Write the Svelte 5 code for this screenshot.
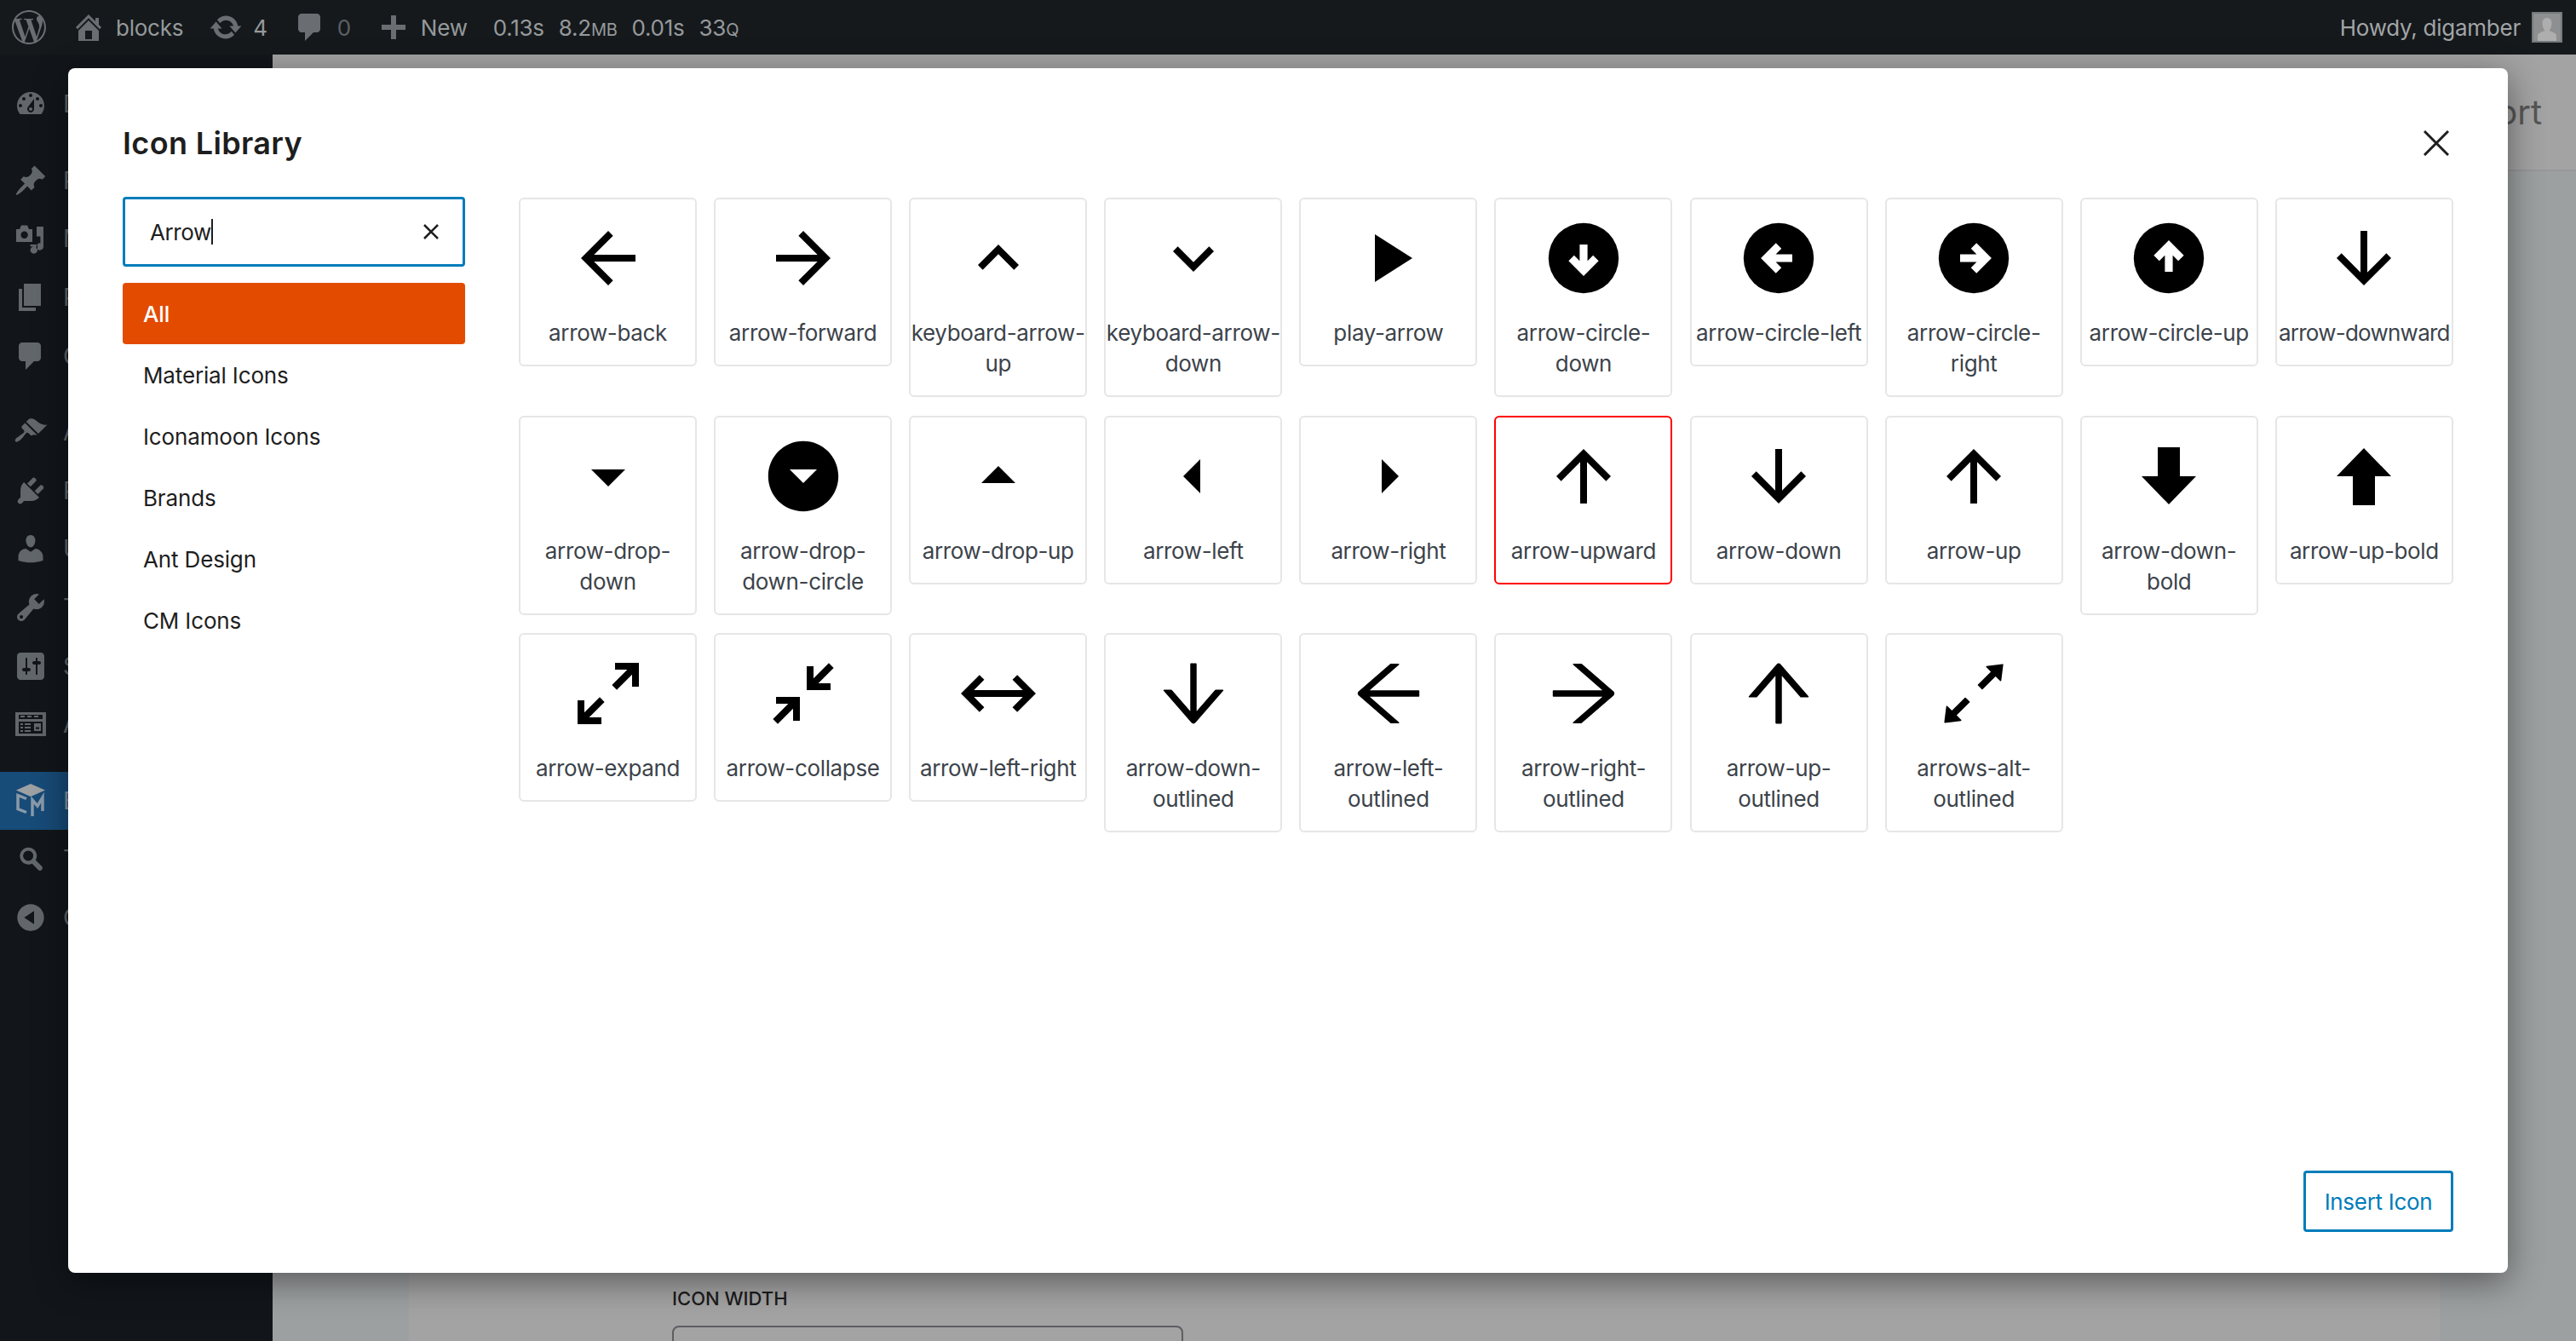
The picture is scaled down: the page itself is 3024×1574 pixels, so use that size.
<script>
  const ANT = '24 24 976 976'
  const upward = 'M4 12l1.41 1.41L11 7.83V20h2V7.83l5.58 5.59L20 12l-8-8-8 8z'
  const downward = 'M20 12l-1.41-1.41L13 16.17V4h-2v12.17l-5.58-5.59L4 12l8 8 8-8z'

  const icons = [
    { name: 'arrow-back', d: 'M20 11H7.83l5.59-5.59L12 4l-8 8 8 8 1.41-1.41L7.83 13H20v-2z' },
    { name: 'arrow-forward', d: 'M12 4l-1.41 1.41L16.17 11H4v2h12.17l-5.58 5.59L12 20l8-8z' },
    { name: 'keyboard-arrow-up', d: 'M7.41 15.41L12 10.83l4.59 4.58L18 14l-6-6-6 6z' },
    { name: 'keyboard-arrow-down', d: 'M7.41 8.59L12 13.17l4.59-4.58L18 10l-6 6-6-6z' },
    { name: 'play-arrow', d: 'M8 5v14l11-7z' },
    { name: 'arrow-circle-down', rot: 90 },
    { name: 'arrow-circle-left', rot: 180 },
    { name: 'arrow-circle-right', rot: 0 },
    { name: 'arrow-circle-up', rot: -90 },
    { name: 'arrow-downward', d: downward, tight: true },
    { name: 'arrow-drop-down', d: 'M7 10l5 5 5-5z' },
    { name: 'arrow-drop-down-circle', d: 'M12 1.7C6.3 1.7 1.7 6.3 1.7 12S6.3 22.3 12 22.3 22.3 17.7 22.3 12 17.7 1.7 12 1.7zm0 12.3l-4-4h8l-4 4z' },
    { name: 'arrow-drop-up', d: 'M7 14l5-5 5 5z' },
    { name: 'arrow-left', d: 'M14 7l-5 5 5 5V7z' },
    { name: 'arrow-right', d: 'M10 17l5-5-5-5v10z' },
    { name: 'arrow-upward', d: upward, selected: true },
    { name: 'arrow-down', d: downward },
    { name: 'arrow-up', d: upward },
    { name: 'arrow-down-bold', d: 'M8.75 3.5h6.5V12H20l-8 8.25L4 12h4.75z' },
    { name: 'arrow-up-bold', d: 'M8.75 20.5h6.5V12H20l-8-8.25L4 12h4.75z' },
    { name: 'arrow-expand', d: 'M10,21V19H6.41L10.91,14.5L9.5,13.09L5,17.59V14H3V21H10M14.5,10.91L19,6.41V10H21V3H14V5H17.59L13.09,9.5L14.5,10.91Z' },
    { name: 'arrow-collapse', d: 'M19.5,3.09L15,7.59V4H13V11H20V9H16.41L20.91,4.5L19.5,3.09M4,13V15H7.59L3.09,19.5L4.5,20.91L9,16.41V20H11V13H4Z' },
    { name: 'arrow-left-right', d: 'M6.45,17.45L1,12L6.45,6.55L7.86,7.96L4.83,11H19.17L16.14,7.96L17.55,6.55L23,12L17.55,17.45L16.14,16.04L19.17,13H4.83L7.86,16.04L6.45,17.45Z' },
    { name: 'arrow-down-outlined', vb: ANT, d: 'M862 465.3h-81c-4.6 0-9 2-12.1 5.5L550 723.1V160c0-4.4-3.6-8-8-8h-60c-4.4 0-8 3.6-8 8v563.1L255.1 470.8c-3-3.5-7.5-5.5-12.1-5.5h-81c-6.8 0-10.5 8.1-6 13.2L487.9 861a31.96 31.96 0 0048.3 0L868 478.5c4.4-5.2.8-13.2-6-13.2z' },
    { name: 'arrow-left-outlined', vb: ANT, d: 'M872 474H286.9l350.2-304c5.6-4.9 2.2-14-5.2-14h-88.5c-3.9 0-7.6 1.4-10.5 3.9L155 487.8a31.96 31.96 0 000 48.3L535.1 866c1.5 1.3 3.3 2 5.2 2h91.5c7.4 0 10.8-9.2 5.2-14L286.9 550H872c4.4 0 8-3.6 8-8v-60c0-4.4-3.6-8-8-8z' },
    { name: 'arrow-right-outlined', vb: ANT, d: 'M869 487.8L491.2 159.9c-2.9-2.5-6.6-3.9-10.5-3.9h-88.5c-7.4 0-10.8 9.2-5.2 14l350.2 304H152c-4.4 0-8 3.6-8 8v60c0 4.4 3.6 8 8 8h585.1L386.9 854c-5.6 4.9-2.2 14 5.2 14h91.5c1.9 0 3.8-.7 5.2-2L869 536.2a32.07 32.07 0 000-48.4z' },
    { name: 'arrow-up-outlined', vb: ANT, d: 'M868 545.5L536.1 163a31.96 31.96 0 00-48.3 0L156 545.5a7.97 7.97 0 006 13.2h81c4.6 0 9-2 12.1-5.5L474 300.9V864c0 4.4 3.6 8 8 8h60c4.4 0 8-3.6 8-8V300.9l218.9 252.3c3 3.5 7.4 5.5 12.1 5.5h81c6.8 0 10.5-8 6-13.2z' },
    { name: 'arrows-alt-outlined', vb: ANT, d: 'M855 160.1l-189.2 23.5c-6.6.8-9.3 8.8-4.7 13.5l54.7 54.7-153.5 153.5a8.03 8.03 0 000 11.3l45.1 45.1c3.1 3.1 8.2 3.1 11.3 0l153.6-153.6 54.7 54.7a7.94 7.94 0 0013.5-4.7L863.9 169a7.9 7.9 0 00-8.9-8.9zM416.6 562.3a8.03 8.03 0 00-11.3 0L251.8 715.9l-54.7-54.7a7.94 7.94 0 00-13.5 4.7L160.1 855c-.6 5.2 3.7 9.5 8.9 8.9l189.2-23.5c6.6-.8 9.3-8.8 4.7-13.5l-54.7-54.7 153.6-153.6c3.1-3.1 3.1-8.2 0-11.3l-45.2-45z' }
  ]

  const libraries = ['All', 'Material Icons', 'Iconamoon Icons', 'Brands', 'Ant Design', 'CM Icons']

  const menu = [
    { label: 'Dashboard', d: 'M3.76 16h12.48c1.1-1.37 1.76-3.11 1.76-5 0-4.42-3.58-8-8-8s-8 3.58-8 8c0 1.89.66 3.63 1.76 5zM10 4c.55 0 1 .45 1 1s-.45 1-1 1-1-.45-1-1 .45-1 1-1zM6 6c.55 0 1 .45 1 1s-.45 1-1 1-1-.45-1-1 .45-1 1-1zm8 0c.55 0 1 .45 1 1s-.45 1-1 1-1-.45-1-1 .45-1 1-1zm-5.37 5.55L12 7v6c0 1.1-.9 2-2 2s-2-.9-2-2c0-.57.24-1.08.63-1.45zM4 10c.55 0 1 .45 1 1s-.45 1-1 1-1-.45-1-1 .45-1 1-1zm12 0c.55 0 1 .45 1 1s-.45 1-1 1-1-.45-1-1 .45-1 1-1zm-5 3c0-.55-.45-1-1-1s-1 .45-1 1 .45 1 1 1 1-.45 1-1z', sep: true },
    { label: 'Posts', d: 'M10.44 3.02l1.82-1.82 6.36 6.35-1.83 1.82c-1.05-.68-2.48-.57-3.41.36l-.75.75c-.92.93-1.04 2.35-.35 3.41l-1.83 1.82-2.41-2.41-2.8 2.79c-.42.42-3.38 2.71-3.8 2.29s1.86-3.39 2.28-3.81l2.79-2.79L4.1 9.36l1.83-1.82c1.05.69 2.48.57 3.4-.36l.75-.75c.93-.92 1.05-2.35.36-3.41z' },
    { label: 'Media', d: 'M1.500 4.500h2l1-2.300h3.500l1 2.300h2v7.500h-9.500V4.500zm4.800 1.300a2.100 2.100 0 100 4.200 2.100 2.100 0 000-4.200zM13.500 3H17.500v11.800a2.100 2.100 0 11-1.800-2.100V8.800h-2.200V3zM9.800 13.500H14v3.300a2.100 2.100 0 11-1.800-2.100v-.1H9.800v-1.100z' },
    { label: 'Pages', d: 'M6 15V2h10v13H6zm-1 1h8v2H3V5h2v11z' },
    { label: 'Comments', d: 'M5 2h9c1.1 0 2 .9 2 2v7c0 1.1-.9 2-2 2h-2l-5 5v-5H5c-1.1 0-2-.9-2-2V4c0-1.1.9-2 2-2z', sep: true },
    { label: 'Appearance', d: 'M14.48 11.06L7.41 3.99l1.5-1.5c.5-.56 2.3-.47 3.51.32 1.21.8 1.43 1.28 2.91 2.1 1.18.64 2.45 1.26 4.45.85zm-.71.71L6.7 4.7 4.93 6.47c-.39.39-.39 1.02 0 1.41l1.06 1.06c.39.39.39 1.03 0 1.42-.6.6-1.43 1.11-2.21 1.69-.35.26-.7.53-1.01.84C1.43 13.23.4 14.89 1.1 15.6c.7.7 2.36-.33 3.7-1.67.31-.31.58-.66.84-1.01.58-.78 1.09-1.61 1.69-2.21.39-.39 1.02-.39 1.41 0l1.06 1.06c.39.39 1.02.39 1.41 0z' },
    { label: 'Plugins', d: 'M13.11 4.36L9.87 7.6 8 5.73l3.24-3.24c.35-.34 1.05-.2 1.56.32.52.51.66 1.21.31 1.55zm-8 1.77l.91-1.12 9.01 9.01-1.19.84c-.71.71-2.63 1.16-3.82 1.16H6.14L4.9 17.26c-.59.59-1.54.59-2.12 0-.59-.58-.59-1.53 0-2.12l1.24-1.24v-3.88c0-1.13.4-3.19 1.09-3.89zm7.26 3.97l3.24-3.24c.34-.35 1.04-.21 1.55.31.52.51.66 1.21.31 1.55l-3.24 3.25z' },
    { label: 'Users', d: 'M10 9.25c-2.27 0-2.73-3.44-2.73-3.44C7 4.02 7.82 2 9.97 2c2.16 0 2.98 2.02 2.71 3.81 0 0-.41 3.44-2.68 3.44zm0 2.57L12.72 10c2.39 0 4.52 2.33 4.52 4.53v2.49s-3.65 1.13-7.24 1.13c-3.65 0-7.24-1.13-7.24-1.13v-2.49c0-2.25 1.94-4.48 4.47-4.48z' },
    { label: 'Tools', d: 'M16.68 9.77c-1.34 1.34-3.3 1.67-4.95.99l-5.41 6.52c-.99.99-2.59.99-3.58 0s-.99-2.59 0-3.57l6.52-5.42c-.68-1.65-.35-3.61.99-4.95 1.28-1.28 3.12-1.62 4.72-1.06l-2.89 2.89 2.82 2.82 2.86-2.87c.53 1.58.18 3.39-1.08 4.65zM3.81 16.21c.4.39 1.04.39 1.43 0 .4-.4.4-1.04 0-1.43-.39-.4-1.03-.4-1.43 0-.39.39-.39 1.03 0 1.43z' },
    { label: 'Settings', d: 'M18 16V4c0-1.1-.9-2-2-2H4c-1.1 0-2 .9-2 2v12c0 1.1.9 2 2 2h12c1.1 0 2-.9 2-2zM8 11h1c.55 0 1 .45 1 1s-.45 1-1 1H8v1.5c0 .28-.22.5-.5.5s-.5-.22-.5-.5V13H6c-.55 0-1-.45-1-1s.45-1 1-1h1V5.5c0-.28.22-.5.5-.5s.5.22.5.5V11zm5-2h-1c-.55 0-1-.45-1-1s.45-1 1-1h1V5.500c0-.28.22-.5.5-.5s.5.22.5.5V7h1c.55 0 1 .45 1 1s-.45 1-1 1h-1v5.500c0 .28-.22.5-.5.5s-.5-.22-.5-.5V9z' },
    { label: 'A', d: 'M1 3h18v14H1V3zm2 1.5V7h14V4.500H3zM4 5h2.500v1H4V5zm4 0h2.500v1H8V5zm4 0h2.500v1H12V5zM3 8.500V15.500h14V8.500H3zM4 9.500h1.500v1H4v-1zm2.500 0H10v1H6.500v-1zM12 9.500h4V14h-4V9.500zm1 2.200v1.200h2v-1.200h-2zM4 11.500h1.500v1H4v-1zm2.500 0H10v1H6.500v-1zM4 13.500h1.500v1H4v-1zm2.500 0H10v1H6.500v-1z', sep: true },
    { label: 'Blocks', active: true },
    { label: 'T', d: 'M12.140 4.780a5 5 0 01.800 6l3.700 3.700a1.500 1.500 0 01-2.100 2.100l-3.700-3.700a5 5 0 111.300-8.100zm-1.400 1.400a3 3 0 10-4.240 4.240 3 3 0 004.240-4.240z' },
    { label: 'Collapse menu', d: 'M10 2.160c4.330 0 7.840 3.510 7.840 7.840s-3.510 7.840-7.840 7.840S2.160 14.330 2.160 10 5.710 2.160 10 2.160zm2 11.720V6.120L6.180 9.970z' }
  ]
</script>

<div class="page">
  <header class="topbar">
    <svg class="wp" viewBox="0 0 24 24"><path d="M21.469 6.825c.84 1.537 1.318 3.3 1.318 5.175 0 3.979-2.156 7.456-5.363 9.325l3.295-9.527c.615-1.54.82-2.771.82-3.864 0-.405-.026-.78-.07-1.11m-7.981.105c.647-.03 1.232-.105 1.232-.105.582-.075.514-.93-.067-.899 0 0-1.755.135-2.88.135-1.064 0-2.85-.15-2.85-.15-.585-.03-.661.855-.075.885 0 0 .54.061 1.125.09l1.68 4.605-2.37 7.08L5.354 6.9c.649-.03 1.234-.1 1.234-.1.585-.075.516-.93-.065-.896 0 0-1.746.138-2.874.138-.2 0-.438-.008-.69-.015C4.911 3.15 8.235 1.215 12 1.215c2.809 0 5.365 1.072 7.286 2.833-.046-.003-.091-.009-.141-.009-1.06 0-1.812.923-1.812 1.914 0 .89.513 1.643 1.06 2.531.411.72.89 1.643.89 2.977 0 .915-.354 1.994-.821 3.479l-1.075 3.585-3.9-11.61.001.014zM12 22.784c-1.059 0-2.081-.153-3.048-.437l3.237-9.406 3.315 9.087c.024.053.05.101.078.149-1.12.393-2.325.609-3.582.609M1.211 12c0-1.564.336-3.05.935-4.39L7.29 21.709C3.694 19.96 1.212 16.271 1.211 12M12 0C5.385 0 0 5.385 0 12s5.385 12 12 12 12-5.385 12-12S18.615 0 12 0" /></svg>
    <div class="ab">
      <svg viewBox="0 0 20 20"><path d="M16 8.5l1.53 1.53-1.06 1.06L10 4.62l-6.47 6.47-1.06-1.06L10 2.5l4 4v-2h2v4zm-6-2.46l6 5.99V18H4v-5.97zM12 17v-5H8v5h4z" /></svg>
      <span>blocks</span>
    </div>
    <div class="ab">
      <svg viewBox="0 0 20 20"><path d="M10.2 3.28c3.53 0 6.43 2.61 6.92 6h2.08l-3.5 4-3.5-4h2.32c-.45-1.97-2.21-3.45-4.32-3.45-1.45 0-2.73.71-3.54 1.78L4.95 5.66C6.230 4.200 8.110 3.280 10.200 3.280zm-.4 13.440c-3.520 0-6.430-2.610-6.920-6H.8l3.500-4c1.170 1.330 2.330 2.670 3.500 4H5.480c.45 1.970 2.210 3.450 4.320 3.450 1.450 0 2.730-.71 3.540-1.780l1.710 1.950c-1.280 1.460-3.150 2.380-5.250 2.380z" /></svg>
      <span>4</span>
    </div>
    <div class="ab">
      <svg viewBox="0 0 20 20"><path d="M5 2h9c1.100 0 2 .9 2 2v7c0 1.100-.9 2-2 2h-2l-5 5v-5H5c-1.100 0-2-.9-2-2V4c0-1.100.9-2 2-2z" /></svg>
      <span class="dim">0</span>
    </div>
    <div class="ab">
      <svg viewBox="0 0 20 20"><path d="M8.500 3h3v5.500H17v3h-5.500V17h-3v-5.500H3v-3h5.500z" /></svg>
      <span>New</span>
    </div>
    <div class="stats">
      <span>0.13s</span>
      <span>8.2<small>MB</small></span>
      <span>0.01s</span>
      <span>33<small>Q</small></span>
    </div>
    <div class="howdy">
      <span>Howdy, digamber</span>
      <div class="avatar">
        <svg viewBox="0 0 32 32"><path d="M16 5c3.500 0 5.500 2.800 5.500 6.500S19.500 19 18.500 20c3.500 1.200 7.500 3 8.500 5v7H5v-7c1-2 5-3.800 8.500-5-1-1-3-4.800-3-8.500S12.500 5 16 5z" /></svg>
      </div>
    </div>
  </header>

  <aside class="sidebar">
    {#each menu as item}
      <div class="menu-item" class:active={item.active} class:sep={item.sep}>
        {#if item.active}
          <svg class="cube" viewBox="0 0 40 40">
            <path class="cube-top" d="M20 0l17 7.500L20 15 3 7.500z" />
            <path class="cube-cm" d="M15 17.500L5 13.500v16L15 33.500M22 38V19l6 7 6-10v16" />
          </svg>
        {:else}
          <svg viewBox="0 0 20 20"><path fill-rule="evenodd" d={item.d} /></svg>
        {/if}
        <span>{item.label}</span>
      </div>
    {/each}
  </aside>

  <main class="content">
    <div class="head"><span>Export</span></div>
    <div class="panel">
      <div class="field-label">ICON WIDTH</div>
      <div class="field-input"></div>
    </div>
  </main>

  <section class="modal">
    <div class="modal-head">
      <h1>Icon Library</h1>
      <svg class="close" viewBox="0 0 30 30"><path d="M1 1l28 28M29 1L1 29" /></svg>
    </div>

    <div class="modal-body">
      <div class="filters">
        <div class="search">
          <span class="query">Arrow</span>
          <span class="caret"></span>
          <svg viewBox="0 0 18 18"><path d="M1 1l16 16M17 1L1 17" /></svg>
        </div>
        <div class="libs">
          {#each libraries as lib, i}
            <div class="lib" class:current={i === 0}>{lib}</div>
          {/each}
        </div>
      </div>

      <div class="grid">
        {#each icons as icon}
          <div class="card" class:selected={icon.selected}>
            <svg class="glyph" viewBox={icon.vb || '0 0 24 24'}>
              {#if icon.rot !== undefined}
                <circle cx="12" cy="12" r="10.3" />
                <path class="inner" transform="rotate({icon.rot} 12 12)" d="M8 12h7M12 8.400l3.600 3.600-3.600 3.600" />
              {:else}
                <path d={icon.d} />
              {/if}
            </svg>
            <div class="label" class:tight={icon.tight}>{icon.name}</div>
          </div>
        {/each}
      </div>
    </div>

    <div class="modal-foot">
      <button class="insert">Insert Icon</button>
    </div>
  </section>
</div>

<style>
  :global(body) {
    margin: 0;
    font-family: Inter, "Liberation Sans", sans-serif;
  }
  .page {
    position: relative;
    width: 3024px;
    height: 1574px;
    overflow: hidden;
    display: grid;
    grid-template-columns: 320px 1fr;
    grid-template-rows: 64px 1fr;
    background: #9da0a1;
  }

  /* admin bar */
  .topbar {
    grid-column: 1 / -1;
    display: flex;
    align-items: center;
    padding: 0 16px 0 14px;
    background: #15191c;
    color: #96999b;
    font-size: 26px;
    letter-spacing: -0.25px;
  }
  .topbar svg {
    fill: #6a6e72;
  }
  .wp {
    width: 40px;
    height: 40px;
  }
  .ab {
    display: flex;
    align-items: center;
    gap: 12px;
    margin-left: 30px;
  }
  .ab svg {
    width: 40px;
    height: 40px;
  }
  .dim {
    color: #5c6064;
  }
  .stats {
    display: flex;
    gap: 17px;
    margin-left: 30px;
  }
  .stats small {
    font-size: 20px;
  }
  .howdy {
    display: flex;
    align-items: center;
    gap: 13px;
    margin-left: auto;
    color: #a2a5a7;
  }
  .avatar {
    box-sizing: border-box;
    width: 36px;
    height: 36px;
    border: 2px solid #76797b;
    background: #8e8f90;
    overflow: hidden;
  }
  .avatar svg {
    display: block;
    width: 32px;
    height: 32px;
    fill: #aeaeae;
  }

  /* admin menu */
  .sidebar {
    background: #12161a;
    padding-top: 24px;
  }
  .menu-item {
    display: flex;
    align-items: center;
    height: 68.6px;
    padding-left: 16px;
    gap: 18px;
    color: #62676b;
    font-size: 28px;
    white-space: nowrap;
  }
  .menu-item svg {
    flex: none;
    width: 40px;
    height: 40px;
    fill: #62676b;
  }
  .menu-item.sep {
    margin-bottom: 21px;
  }
  .menu-item.active {
    background: #174b78;
    color: #8793a0;
  }
  .cube-top {
    fill: #9da1a4;
  }
  .cube-cm {
    fill: none;
    stroke: #8a9aa8;
    stroke-width: 3.500;
  }

  /* page behind the dialog */
  .content {
    display: flex;
    flex-direction: column;
    min-width: 0;
  }
  .head {
    display: flex;
    justify-content: flex-end;
    align-items: center;
    height: 137px;
    padding-right: 40px;
    box-sizing: border-box;
    background: #a3a3a3;
    border-bottom: 2px solid #959798;
    color: #565656;
    font-size: 40px;
  }
  .panel {
    flex: 1;
    margin: 0 160px;
    padding: 1311px 0 0 309px;
    background: #a3a3a3;
  }
  .field-label {
    color: #1b1b1b;
    font-size: 22px;
    font-weight: 500;
    line-height: 24px;
  }
  .field-input {
    width: 600px;
    height: 60px;
    margin-top: 20px;
    border: 2px solid #5d5d62;
    border-radius: 8px;
    box-sizing: border-box;
  }

  /* dialog */
  .modal {
    position: absolute;
    left: 80px;
    top: 80px;
    width: 2864px;
    height: 1414px;
    box-sizing: border-box;
    display: flex;
    flex-direction: column;
    padding: 64px 64px 48px;
    background: #fff;
    border-radius: 8px;
    box-shadow: 0 10px 40px rgba(0, 0, 0, 0.45);
  }
  .modal-head {
    display: flex;
    justify-content: space-between;
    align-items: center;
    height: 48px;
    margin-bottom: 39px;
  }
  h1 {
    margin: 0;
    color: #1e1e1e;
    font-size: 36px;
    font-weight: 600;
    line-height: 48px;
    letter-spacing: 0.35px;
  }
  .close {
    width: 30px;
    height: 30px;
    margin-right: 5px;
    stroke: #1e1e1e;
    stroke-width: 3;
    fill: none;
  }
  .modal-body {
    flex: 1;
    display: flex;
    gap: 63px;
    min-height: 0;
  }
  .filters {
    flex: none;
    width: 402px;
  }
  .search {
    display: flex;
    align-items: center;
    height: 82px;
    box-sizing: border-box;
    padding: 0 28px 0 29px;
    border: 3px solid #007cba;
    border-radius: 4px;
    color: #1e1e1e;
    font-size: 26px;
    letter-spacing: -0.4px;
  }
  .caret {
    width: 2px;
    height: 30px;
    background: #1e1e1e;
  }
  .search svg {
    width: 18px;
    height: 18px;
    margin-left: auto;
    stroke: #1e1e1e;
    stroke-width: 2.500;
    fill: none;
  }
  .libs {
    margin-top: 19px;
  }
  .lib {
    height: 72px;
    padding-left: 24px;
    border-radius: 4px;
    color: #1e1e1e;
    font-size: 26px;
    line-height: 74px;
    letter-spacing: -0.15px;
  }
  .lib.current {
    background: #e34b00;
    color: #fff;
    font-weight: 500;
  }
  .grid {
    flex: 1;
    display: flex;
    flex-wrap: wrap;
    align-items: flex-start;
    align-content: flex-start;
    gap: 21.500px 20.100px;
    padding-top: 1px;
  }
  .card {
    box-sizing: border-box;
    width: 209px;
    padding: 21px 0 19px;
    border: 2px solid #e6e6e6;
    border-radius: 6px;
    text-align: center;
  }
  .card.selected {
    border-color: #f00;
  }
  .glyph {
    display: block;
    width: 96px;
    height: 96px;
    margin: 0 auto 22px;
  }
  .inner {
    fill: none;
    stroke: #fff;
    stroke-width: 2.300;
  }
  .label {
    color: #3c434a;
    font-size: 26px;
    line-height: 36px;
    letter-spacing: -0.35px;
  }
  .label.tight {
    white-space: nowrap;
    letter-spacing: -0.75px;
  }
  .modal-foot {
    display: flex;
    justify-content: flex-end;
  }
  .insert {
    width: 176px;
    height: 72px;
    padding: 0;
    background: #fff;
    border: 3px solid #007cba;
    border-radius: 4px;
    color: #007cba;
    font-family: inherit;
    font-size: 26px;
    letter-spacing: -0.3px;
  }
</style>
